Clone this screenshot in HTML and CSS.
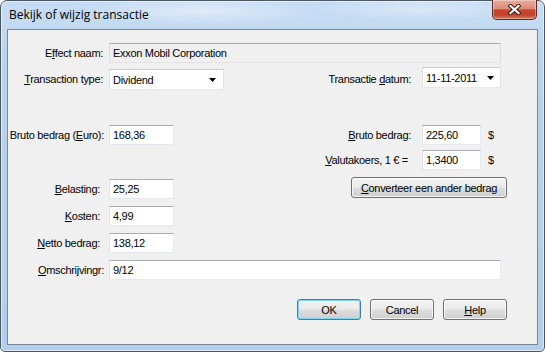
FILE: index.html
```html
<!DOCTYPE html>
<html lang="nl">
<head>
<meta charset="utf-8">
<title>Bekijk of wijzig transactie</title>
<link rel="stylesheet" href="styles.css">
</head>
<body>
<div class="window">
  <div class="titlebar">
    <span class="title">Bekijk of wijzig transactie</span>
    <div class="close">
      <svg width="13" height="11" viewBox="0 0 13 11">
        <path d="M2.5 2 L10.5 9 M10.5 2 L2.5 9" stroke="#3d1a14" stroke-width="4.2" stroke-linecap="square" fill="none"/>
        <path d="M2.5 2 L10.5 9 M10.5 2 L2.5 9" stroke="#ffffff" stroke-width="2.2" stroke-linecap="square" fill="none"/>
      </svg>
    </div>
  </div>
  <div class="client">
    <div class="row row-effect">
      <span class="lbl pr6">E<u>f</u>fect naam:</span>
      <div class="field readonly w-wide">Exxon Mobil Corporation</div>
    </div>

    <div class="row row-type">
      <div class="left">
        <span class="lbl pr6 self-end"><u>T</u>ransaction type:</span>
        <div class="field combo self-end">Dividend
          <svg class="arrow" width="7" height="4" viewBox="0 0 7 4"><polygon points="0,0 7,0 3.5,4" fill="#000"/></svg>
        </div>
      </div>
      <div class="right">
        <span class="rlabel self-end">Transactie <u>d</u>atum:</span>
        <div class="field datepick self-start">11-11-2011
          <svg class="arrow" width="7" height="4" viewBox="0 0 7 4"><polygon points="0,0 7,0 3.5,4" fill="#000"/></svg>
        </div>
      </div>
    </div>

    <div class="row row-bruto">
      <div class="left">
        <span class="lbl">Bruto bedrag (<u>E</u>uro):</span>
        <div class="field w-num">168,36</div>
      </div>
      <div class="right">
        <span class="rlabel"><u>B</u>ruto bedrag:</span>
        <div class="field w-rnum">225,60</div>
        <span class="cur">$</span>
      </div>
    </div>

    <div class="row row-valuta">
      <div class="left"></div>
      <div class="right">
        <span class="rlabel pr14"><u>V</u>alutakoers, 1 € =</span>
        <div class="field w-rnum">1,3400</div>
        <span class="cur">$</span>
      </div>
    </div>

    <div class="row row-belasting">
      <div class="left">
        <span class="lbl pr9"><u>B</u>elasting:</span>
        <div class="field w-num">25,25</div>
      </div>
      <div class="right">
        <button class="btn btn-convert"><u>C</u>onverteer een ander bedrag</button>
      </div>
    </div>

    <div class="row row-std">
      <span class="lbl pr9"><u>K</u>osten:</span>
      <div class="field w-num">4,99</div>
    </div>

    <div class="row row-std">
      <span class="lbl pr9"><u>N</u>etto bedrag:</span>
      <div class="field w-num">138,12</div>
    </div>

    <div class="row row-std">
      <span class="lbl"><u>O</u>mschrijvingr:</span>
      <div class="field w-wide">9/12</div>
    </div>

    <div class="row row-buttons">
      <button class="btn btn-default">OK</button>
      <button class="btn">Cancel</button>
      <button class="btn"><u>H</u>elp</button>
    </div>
  </div>
</div>
</body>
</html>
```

FILE: styles.css
```css
html, body {
  margin: 0;
  padding: 0;
  background: #ffffff;
}

body {
  font-family: "Liberation Sans", Arial, sans-serif;
  font-size: 11px;
  letter-spacing: -0.3px;
  color: #000;
}

.window {
  box-sizing: border-box;
  width: 545px;
  height: 352px;
  border: 1px solid #4b5664;
  border-radius: 7px 7px 5px 5px;
  padding: 0 6px 6px 6px;
  display: flex;
  flex-direction: column;
  background:
    radial-gradient(ellipse 120px 14px at 200px 10px, rgba(255,255,255,0.45), rgba(255,255,255,0) 100%),
    radial-gradient(ellipse 110px 12px at 420px 8px, rgba(255,255,255,0.35), rgba(255,255,255,0) 100%),
    linear-gradient(180deg, #c6dcf3 0px, #c3daf3 28px, #b9d2ed 60px, #b4cfeb 100%);
  box-shadow: inset 0 0 0 1px rgba(255,255,255,0.6);
}

.titlebar {
  height: 28px;
  display: flex;
  align-items: flex-start;
}

.title {
  font-family: "Open Sans", "Noto Sans", sans-serif;
  font-size: 12px;
  letter-spacing: 0;
  line-height: 16px;
  margin: 6px 0 0 2px;
  color: #000;
}

.close {
  box-sizing: border-box;
  margin: -1px 1px 0 auto;
  width: 45px;
  height: 20px;
  border: 1px solid #5b2a22;
  border-top: none;
  border-radius: 0 0 5px 5px;
  background: linear-gradient(180deg, #e8aa9c 0%, #de8d7b 45%, #c9472c 52%, #c1432b 78%, #d87a5a 100%);
  box-shadow: inset 0 0 0 1px rgba(255,255,255,0.35);
  display: flex;
  align-items: center;
  justify-content: center;
}

.client {
  flex: 1;
  border: 1px solid #77889a;
  background: #f0f0f0;
  display: flex;
  flex-direction: column;
}

.row {
  display: flex;
  align-items: center;
  flex: 0 0 auto;
}

.row-effect { margin-top: 13px; height: 20px; }
.row-type { margin-top: 4px; height: 23px; align-items: stretch; }
.row-bruto { margin-top: 35px; height: 20px; }
.row-valuta { margin-top: 5px; height: 20px; }
.row-belasting { margin-top: 7px; height: 22px; align-items: flex-start; }
.row-std { margin-top: 7px; height: 20px; }
.row-buttons {
  margin-top: 19px;
  height: 21px;
  justify-content: flex-end;
  gap: 9px;
  padding-right: 30px;
}

.left {
  flex: 0 0 292px;
  display: flex;
  align-items: inherit;
}

.right {
  flex: 1;
  display: flex;
  align-items: inherit;
}

.row-belasting .left { align-self: flex-end; align-items: center; }
.row-belasting .right { align-items: flex-start; }

.self-end { align-self: flex-end; }
.self-start { align-self: flex-start; }

.lbl {
  box-sizing: border-box;
  flex: 0 0 101px;
  text-align: right;
  padding-right: 5px;
  white-space: nowrap;
  line-height: 20px;
}

.row-type .lbl, .row-type .rlabel { line-height: 21px; }

.pr6 { padding-right: 6px; }
.pr9 { padding-right: 9px; }

.rlabel {
  box-sizing: border-box;
  flex: 0 0 122px;
  text-align: right;
  padding-right: 11px;
  white-space: nowrap;
  line-height: 20px;
}

.rlabel.pr14 { padding-right: 14px; }

.field {
  box-sizing: border-box;
  height: 20px;
  background: #ffffff;
  border: 1px solid;
  border-color: #abadb3 #e3e9ef #e3e9ef #e2e3ea;
  padding: 0 3px;
  display: flex;
  align-items: center;
  white-space: nowrap;
}

.field.readonly {
  background: #f0f0f0;
  border-color: #abadb3 #dcdcdc #e3e3e3 #dcdcdc;
}

.w-wide { width: 392px; }
.w-num { width: 65px; }
.w-rnum { width: 59px; }

.combo {
  width: 115px;
  height: 21px;
  position: relative;
  border-color: #c9ccd1 #e0e3e8 #e3e9ef #e0e3e8;
}

.datepick {
  width: 79px;
  height: 21px;
  position: relative;
  border-color: #c9ccd1 #e0e3e8 #e3e9ef #e0e3e8;
}

.arrow {
  margin-left: auto;
  margin-right: 4px;
}

.datepick .arrow { margin-right: 3px; margin-top: 1px; }

.cur {
  margin-left: 7px;
  line-height: 20px;
}

.btn {
  box-sizing: border-box;
  width: 64px;
  height: 21px;
  padding: 0;
  margin: 0;
  border: 1px solid #707070;
  border-radius: 3px;
  background: linear-gradient(180deg, #f2f2f2 0%, #ebebeb 48%, #dddddd 52%, #cfcfcf 100%);
  box-shadow: inset 0 0 0 1px rgba(255,255,255,0.75);
  font-family: "Liberation Sans", Arial, sans-serif;
  font-size: 11px;
  letter-spacing: -0.3px;
  color: #000;
}

.btn-default {
  border-color: #3c7fb1;
  box-shadow: inset 0 0 0 1px #7fd6f7;
}

.btn-convert {
  width: 156px;
  margin-left: 51px;
}

u { text-decoration: underline; text-underline-offset: 1px; }
```
